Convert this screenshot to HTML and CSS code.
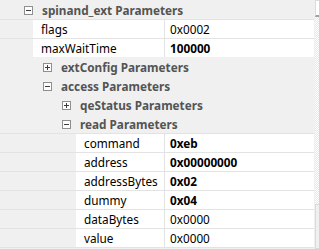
FILE: index.html
```html
<!DOCTYPE html>
<html lang="en">
<head>
    <meta charset="UTF-8">
    <title>spinand_ext Parameters</title>
    <link rel="stylesheet" href="styles.css">
</head>
<body>
    <div class="grid">
        <div class="row group lvl0"><span class="toggle minus"></span><span class="name">spinand_ext Parameters</span></div>
        <div class="row prop under0"><span class="key">flags</span><span class="val">0x0002</span></div>
        <div class="row prop under0"><span class="key">maxWaitTime</span><span class="val changed">100000</span></div>
        <div class="row group lvl1"><span class="toggle plus"></span><span class="name">extConfig Parameters</span></div>
        <div class="row group lvl1"><span class="toggle minus"></span><span class="name">access Parameters</span></div>
        <div class="row group lvl2"><span class="toggle plus"></span><span class="name">qeStatus Parameters</span></div>
        <div class="row group lvl2"><span class="toggle minus"></span><span class="name">read Parameters</span></div>
        <div class="row prop under2"><span class="key">command</span><span class="val changed">0xeb</span></div>
        <div class="row prop under2"><span class="key">address</span><span class="val changed">0x00000000</span></div>
        <div class="row prop under2"><span class="key">addressBytes</span><span class="val changed">0x02</span></div>
        <div class="row prop under2"><span class="key">dummy</span><span class="val changed">0x04</span></div>
        <div class="row prop under2"><span class="key">dataBytes</span><span class="val">0x0000</span></div>
        <div class="row prop under2 last"><span class="key">value</span><span class="val">0x0000</span></div>
    </div>
    <div class="scrollbar">
        <div class="sb-btn"></div>
        <div class="sb-track"></div>
        <div class="sb-thumb"></div>
    </div>
</body>
</html>
```

FILE: styles.css
```css
* {
    margin: 0;
    padding: 0;
    box-sizing: border-box;
}
body {
    font-family: 'Noto Sans', 'Segoe UI', sans-serif;
    font-size: 11.75px;
    background: #f0f0f0;
    display: flex;
    height: 249px;
    overflow: hidden;
}
.grid {
    width: 314px;
    flex-shrink: 0;
}
.row {
    display: flex;
    align-items: center;
    height: 19px;
    border-top: 1px solid #f0f0f0;
}
/* group headers */
.group .name {
    font-weight: bold;
    color: #545454;
}
.group .toggle {
    position: relative;
    width: 9px;
    height: 9px;
    border: 1px solid #8f8f8f;
    background: #fdfdfd;
    margin-right: 9px;
    flex-shrink: 0;
}
.toggle::before,
.toggle::after {
    content: '';
    position: absolute;
    background: #3c3c3c;
}
.toggle::before {
    left: 1px;
    top: 3px;
    width: 5px;
    height: 1px;
}
.plus::after {
    left: 3px;
    top: 1px;
    width: 1px;
    height: 5px;
}
.lvl0 { padding-left: 24px; }
.lvl1 { padding-left: 43px; }
.lvl2 { padding-left: 62px; }
/* property rows */
.prop {
    border-top-color: #e3e3e3;
}
.under0 { padding-left: 33px; }
.under2 { padding-left: 76px; }
.prop .key,
.prop .val {
    height: 100%;
    background: #fff;
    display: flex;
    align-items: center;
    color: #000;
}
.prop .key {
    flex: 1;
    padding-left: 8px;
    border-right: 1px solid #e3e3e3;
}
.prop .val {
    width: 149px;
    padding-left: 5px;
}
.changed {
    font-weight: bold;
}
.last {
    height: 20px;
    border-bottom: 1px solid #e3e3e3;
}
/* cut off scrollbar */
.scrollbar {
    width: 17px;
    flex-shrink: 0;
    display: flex;
    flex-direction: column;
    border-left: 1px solid #f0f0f0;
}
.sb-btn {
    height: 17px;
    background: #fff;
    border: 1px solid #dcdcdc;
    border-bottom: 2px solid #a0a0a0;
}
.sb-track {
    height: 187px;
    background-color: #fff;
    background-image: repeating-conic-gradient(#e6e6e6 0 25%, #fff 0 50%);
    background-size: 2px 2px;
}
.sb-thumb {
    flex: 1;
    background: #f0f0f0;
    border: 1px solid #dadada;
}
```
